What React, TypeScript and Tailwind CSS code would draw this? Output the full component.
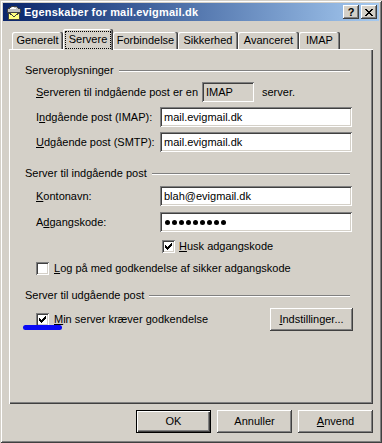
import React from 'react';

const raised = '[box-shadow:inset_-1px_-1px_#404040,inset_1px_1px_#fff,inset_-2px_-2px_#808080,inset_2px_2px_#d4d0c8]';
const sunken = '[box-shadow:inset_1px_1px_#808080,inset_-1px_-1px_#fff,inset_2px_2px_#404040,inset_-2px_-2px_#d4d0c8]';

const MailIcon = () => (
  <svg width="16" height="16" viewBox="0 0 16 16" shapeRendering="crispEdges">
    <path d="M2 6 L7 2 L10 2 L15 5 L15 8 L2 8 Z" fill="#c0c0c0" stroke="#404040" strokeWidth="1" />
    <path d="M4 5 L8 3 L12 5 Z" fill="#fff" />
    <rect x="3.5" y="8.5" width="11" height="7" fill="#ffff80" stroke="#404040" />
    <path d="M3.5 8.5 L9 12.5 L14.5 8.5" fill="none" stroke="#404040" />
  </svg>
);

const Check = () => (
  <svg width="13" height="13" viewBox="0 0 13 13" shapeRendering="crispEdges" className="block">
    <rect x="3" y="5" width="1" height="3" fill="#000" />
    <rect x="4" y="6" width="1" height="3" fill="#000" />
    <rect x="5" y="7" width="1" height="3" fill="#000" />
    <rect x="6" y="6" width="1" height="3" fill="#000" />
    <rect x="7" y="5" width="1" height="3" fill="#000" />
    <rect x="8" y="4" width="1" height="3" fill="#000" />
    <rect x="9" y="3" width="1" height="3" fill="#000" />
  </svg>
);

const Checkbox = ({ checked }: { checked?: boolean }) => (
  <div className={`w-[13px] h-[13px] bg-white shrink-0 ${sunken}`}>
    {checked && <Check />}
  </div>
);

const Group = ({ label }: { label: string }) => (
  <div className="flex items-center h-[13px]">
    <span>{label}</span>
    <div className="flex-1 ml-[5px] mr-[2px] h-[2px] border-t border-t-[#808080] border-b border-b-white" />
  </div>
);

const Field = ({ label, value }: { label: React.ReactNode; value: React.ReactNode }) => (
  <div className="flex items-center pl-[11px] h-[20px]">
    <span className="w-[124px] shrink-0">{label}</span>
    <div className={`flex-1 h-[20px] bg-white flex items-center pl-[4px] ${sunken}`}>{value}</div>
  </div>
);

const tabs = [
  { name: 'Generelt', w: 'w-[51px]' },
  { name: 'Servere', w: 'w-[50px]', active: true },
  { name: 'Forbindelse', w: 'w-[65px]' },
  { name: 'Sikkerhed', w: 'w-[60px]' },
  { name: 'Avanceret', w: 'w-[61px]' },
  { name: 'IMAP', w: 'w-[41px]' },
];

export default function App() {
  return (
    <div className="w-[382px] h-[443px] bg-[#d4d0c8] p-[3px] flex flex-col text-[11px] leading-[13px] text-black font-['Tahoma','Liberation_Sans',sans-serif] [box-shadow:inset_1px_1px_#d4d0c8,inset_-1px_-1px_#404040,inset_2px_2px_#fff,inset_-2px_-2px_#808080]">
      {/* title bar */}
      <div className="h-[18px] flex items-center bg-linear-to-r from-[#0a246a] to-[#a6caf0] pl-[2px] pr-[2px]">
        <MailIcon />
        <span className="ml-[3px] text-white font-bold tracking-[0.2px]">Egenskaber for mail.evigmail.dk</span>
        <div className="ml-auto flex">
          <div className={`w-[16px] h-[14px] bg-[#d4d0c8] flex items-center justify-center font-bold text-[11px] leading-none ${raised}`}>?</div>
          <div className={`ml-[2px] w-[16px] h-[14px] bg-[#d4d0c8] flex items-center justify-center ${raised}`}>
            <svg width="8" height="7" viewBox="0 0 8 7" shapeRendering="crispEdges">
              <path d="M0 0h2v1h-2zM6 0h2v1h-2zM1 1h2v1h-2zM5 1h2v1h-2zM2 2h4v1h-4zM3 3h2v1h-2zM2 4h4v1h-4zM1 5h2v1h-2zM5 5h2v1h-2zM0 6h2v1h-2zM6 6h2v1h-2z" fill="#000" />
            </svg>
          </div>
        </div>
      </div>

      <div className="flex-1 flex flex-col px-[6px] pt-[8px]">
        {/* tabs */}
        <div className="flex items-end h-[20px] pl-[3px]">
          {tabs.map((t) =>
            t.active ? (
              <div key={t.name} className={`${t.w} h-[21px] -mb-px relative z-10 bg-[#d4d0c8] rounded-tl-[2px] rounded-tr-[2px] flex items-start justify-center pt-[3px] [box-shadow:inset_-1px_0_#404040,inset_-2px_0_#808080,inset_1px_1px_#fff]`}>
                <span className="px-[3px] pt-[1px] pb-[2px] outline outline-1 outline-dotted outline-black">Servere</span>
              </div>
            ) : (
              <div key={t.name} className={`${t.w} h-[17px] bg-[#d4d0c8] rounded-tl-[2px] rounded-tr-[2px] flex items-center justify-center [box-shadow:inset_-1px_0_#404040,inset_-2px_0_#808080,inset_1px_1px_#fff]`}>
                {t.name}
              </div>
            )
          )}
        </div>

        {/* panel */}
        <div className="h-[355px] flex flex-col pl-[16px] pr-[21px] [box-shadow:inset_1px_1px_#fff,inset_-1px_-1px_#404040,inset_-2px_-2px_#808080]">
          <div className="mt-[15px]">
            <Group label="Serveroplysninger" />
          </div>
          <div className="mt-[5px] flex items-center pl-[11px] h-[20px]">
            <span className="w-[166px] shrink-0">
              <u>S</u>erveren til indgående post er en
            </span>
            <div className={`w-[52px] h-[20px] flex items-center pl-[4px] ${sunken}`}>IMAP</div>
            <span className="ml-[8px]">server.</span>
          </div>
          <div className="mt-[5px]">
            <Field label={<>I<u>n</u>dgående post (IMAP):</>} value="mail.evigmail.dk" />
          </div>
          <div className="mt-[5px]">
            <Field label={<><u>U</u>dgående post (SMTP):</>} value="mail.evigmail.dk" />
          </div>

          <div className="mt-[15px]">
            <Group label="Server til indgående post" />
          </div>
          <div className="mt-[6px]">
            <Field label={<><u>K</u>ontonavn:</>} value="blah@evigmail.dk" />
          </div>
          <div className="mt-[6px]">
            <Field
              label={<>A<u>d</u>gangskode:</>}
              value={
                <div className="flex gap-[2px] pl-[1px]">
                  {Array.from({ length: 9 }).map((_, i) => (
                    <div key={i} className="w-[5px] h-[5px] rounded-full bg-black" />
                  ))}
                </div>
              }
            />
          </div>
          <div className="mt-[8px] flex items-center h-[13px] pl-[137px]">
            <Checkbox checked />
            <span className="ml-[4px]"><u>H</u>usk adgangskode</span>
          </div>
          <div className="mt-[9px] flex items-center h-[13px] pl-[11px]">
            <Checkbox />
            <span className="ml-[5px]"><u>L</u>og på med godkendelse af sikker adgangskode</span>
          </div>

          <div className="mt-[14px]">
            <Group label="Server til udgående post" />
          </div>
          <div className="mt-[6px] flex items-center h-[23px] pl-[11px] relative">
            <Checkbox checked />
            <span className="ml-[5px]"><u>M</u>in server kræver godkendelse</span>
            <div className={`ml-auto -mr-px w-[83px] h-[23px] flex items-center justify-center ${raised}`}>
              <span><u>I</u>ndstillinger...</span>
            </div>
            <div className="absolute left-[-2px] top-[17px] w-[39px] h-[5px] rounded-full bg-[#0a0af5]" />
          </div>
        </div>

        {/* buttons */}
        <div className="mt-[6px] flex justify-end gap-[6px]">
          <div className="w-[75px] h-[23px] flex items-center justify-center [box-shadow:inset_0_0_0_1px_#000,inset_2px_2px_#fff,inset_-2px_-2px_#404040,inset_-3px_-3px_#808080]">OK</div>
          <div className={`w-[75px] h-[23px] flex items-center justify-center ${raised}`}>Annuller</div>
          <div className={`w-[75px] h-[23px] flex items-center justify-center ${raised}`}><span><u>A</u>nvend</span></div>
        </div>
      </div>
    </div>
  );
}
